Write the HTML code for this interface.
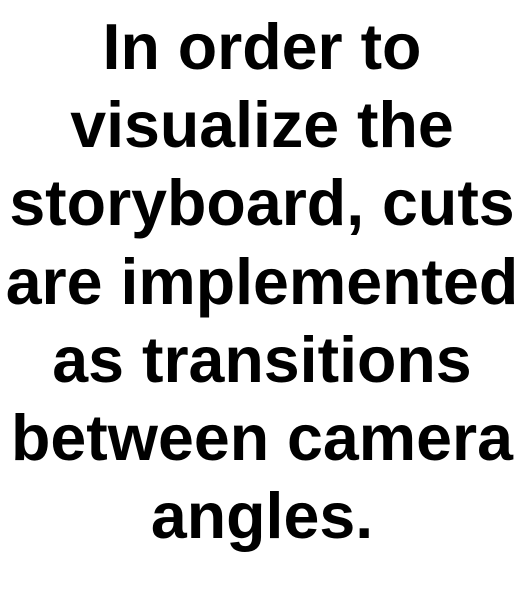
<!DOCTYPE html>
<html><head><meta charset="utf-8"><style>
html,body{margin:0;padding:0;background:#fff;width:524px;height:607px;overflow:hidden}
div{padding-top:8px;text-align:center;font-family:"Liberation Sans",Arial,sans-serif;font-weight:bold;font-size:64.5px;line-height:78.2px;color:#000;white-space:nowrap}
</style></head><body><div>In order to<br>visualize the<br>storyboard, cuts<br>are implemented<br>as transitions<br>between camera<br>angles.</div></body></html>
